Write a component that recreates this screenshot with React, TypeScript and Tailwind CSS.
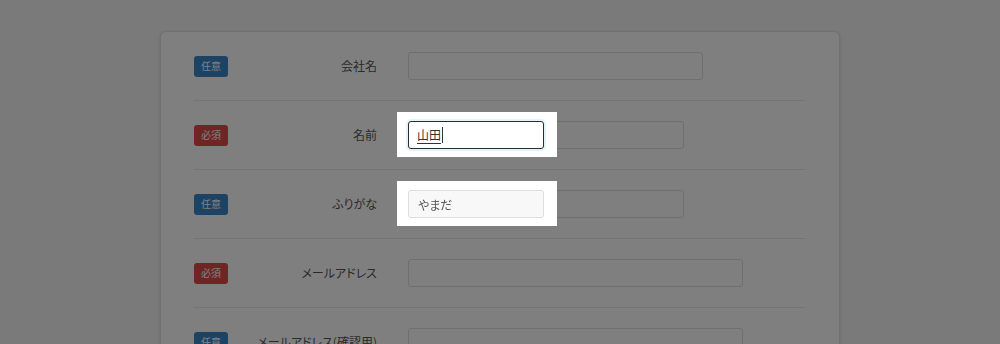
import React from "react";

type Row = {
  required: boolean;
  label: string;
  kind: "wide" | "name" | "kana" | "mail";
};

const rows: Row[] = [
  { required: false, label: "会社名", kind: "wide" },
  { required: true, label: "名前", kind: "name" },
  { required: false, label: "ふりがな", kind: "kana" },
  { required: true, label: "メールアドレス", kind: "mail" },
  { required: false, label: "メールアドレス(確認用)", kind: "mail" },
];

function Badge({ required }: { required: boolean }) {
  return (
    <span
      className={`flex h-[21px] w-[34px] shrink-0 items-center justify-center rounded-[3px] text-[10px] leading-none text-white ${
        required ? "bg-[#e04848]" : "bg-[#3a86c8]"
      }`}
    >
      {required ? "必須" : "任意"}
    </span>
  );
}

function TextInput({ width, value, muted }: { width: string; value?: string; muted?: boolean }) {
  return (
    <input
      readOnly
      defaultValue={value}
      className={`h-[28px] ${width} rounded-[3px] border border-[#dedede] px-[9px] text-[12px] text-[#555] outline-none ${
        muted ? "bg-[#f8f8f8]" : "bg-white"
      }`}
    />
  );
}

// highlighted field sits above the dim layer with a white backdrop
function Spotlight({ children }: { children: React.ReactNode }) {
  return (
    <div className="relative z-20 before:absolute before:-top-[9px] before:-bottom-[8px] before:-left-[11px] before:-right-[13px] before:bg-white before:content-['']">
      <div className="relative">{children}</div>
    </div>
  );
}

function Field({ kind }: { kind: Row["kind"] }) {
  if (kind === "wide") return <TextInput width="w-[295px]" />;
  if (kind === "mail") return <TextInput width="w-[335px]" />;
  if (kind === "name")
    return (
      <div className="flex gap-[4px]">
        <Spotlight>
          <div className="flex h-[28px] w-[136px] items-center rounded-[3px] border-[1.5px] border-[#2b2b2b] bg-white px-[8px] text-[12px] text-[#333] shadow-[0_0_0_2px_#e3f4fb]">
            <span className="underline decoration-[#333] underline-offset-[3px]">山田</span>
            <span className="ml-px h-[16px] w-px bg-[#333]" />
          </div>
        </Spotlight>
        <TextInput width="w-[136px]" />
      </div>
    );
  return (
    <div className="flex gap-[4px]">
      <Spotlight>
        <TextInput width="w-[136px]" value="やまだ" muted />
      </Spotlight>
      <TextInput width="w-[136px]" />
    </div>
  );
}

export default function App() {
  return (
    <div className="relative h-screen overflow-hidden bg-[#f5f5f5] pt-[31px] font-['Noto_Sans_CJK_JP',sans-serif] [font-feature-settings:'palt']">
      <div className="mx-auto w-[680px] rounded-[6px] border border-[#e2e2e2] bg-white pl-[33px] pr-[34px] shadow-[0_1px_4px_rgba(0,0,0,0.12)]">
        {rows.map((row, i) => (
          <div key={i} className="flex items-center border-b border-[#e8e8e8] py-[20px]">
            <Badge required={row.required} />
            <label className="w-[150px] shrink-0 pr-px text-right text-[12px] text-[#555]">{row.label}</label>
            <div className="ml-[30px]">
              <Field kind={row.kind} />
            </div>
          </div>
        ))}
      </div>
      <div className="fixed inset-0 z-10 bg-black/50" />
    </div>
  );
}
